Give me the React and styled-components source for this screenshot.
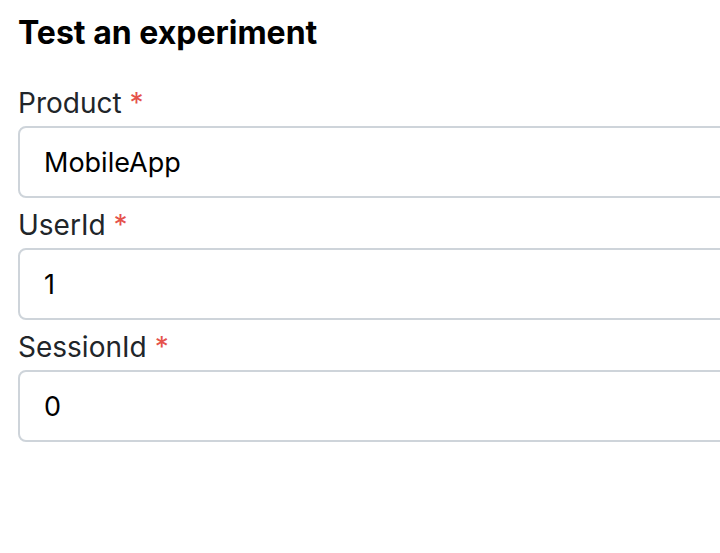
import React from 'react'
import styled, { createGlobalStyle } from 'styled-components'

const GlobalStyle = createGlobalStyle`
  body {
    margin: 0;
    background: #fff;
    font-family: Inter, "Noto Sans", sans-serif;
    color: #212529;
  }
`

const Page = styled.div`
  padding: 13px 0 0 18px;
  overflow: hidden;
`

const Title = styled.h2`
  margin: 0 0 31px;
  font-size: 32px;
  line-height: 40px;
  font-weight: 700;
  color: #000;
`

const Field = styled.div`
  display: flex;
  flex-direction: column;
  margin-bottom: 8px;
`

const Label = styled.label`
  font-size: 28px;
  line-height: 38px;
  margin-bottom: 4px;
  color: #212529;
`

const Star = styled.span`
  color: #e5534b;
  margin-left: 8px;
`

const Input = styled.input`
  box-sizing: border-box;
  width: 760px;
  height: 72px;
  padding: 0 24px;
  border: 2px solid #ced4da;
  border-radius: 8px;
  font-family: inherit;
  font-size: 27px;
  color: #000;
  background: #fff;
  outline: none;
`

const fields = [
  { label: 'Product', value: 'MobileApp' },
  { label: 'UserId', value: '1' },
  { label: 'SessionId', value: '0' },
]

export default function App() {
  return (
    <>
      <GlobalStyle />
      <Page>
        <Title>Test an experiment</Title>
        {fields.map(f => (
          <Field key={f.label}>
            <Label>
              {f.label}
              <Star>*</Star>
            </Label>
            <Input defaultValue={f.value} readOnly />
          </Field>
        ))}
      </Page>
    </>
  )
}
